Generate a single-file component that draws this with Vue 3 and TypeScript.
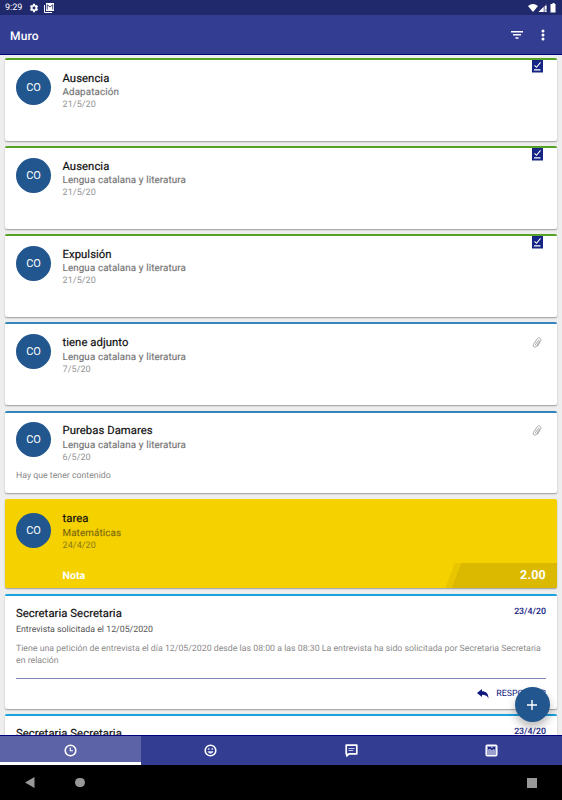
<script setup lang="ts">
interface Entry {
  title: string
  subject: string
  date: string
  tone: 'green' | 'blue'
  badge?: 'check' | 'clip'
  note?: string
}

const entries: Entry[] = [
  { title: 'Ausencia', subject: 'Adapatación', date: '21/5/20', tone: 'green', badge: 'check' },
  { title: 'Ausencia', subject: 'Lengua catalana y literatura', date: '21/5/20', tone: 'green', badge: 'check' },
  { title: 'Expulsión', subject: 'Lengua catalana y literatura', date: '21/5/20', tone: 'green', badge: 'check' },
  { title: 'tiene adjunto', subject: 'Lengua catalana y literatura', date: '7/5/20', tone: 'blue', badge: 'clip' },
  { title: 'Purebas Damares', subject: 'Lengua catalana y literatura', date: '6/5/20', tone: 'blue', badge: 'clip', note: 'Hay que tener contenido' },
]
</script>

<template>
  <div class="screen">
    <div class="status">
      <span class="clock">9:29</span>
      <svg class="gear" viewBox="0 0 24 24" width="10" height="10"><path fill="#fff" fill-rule="evenodd" d="M19.4 13a7.500 7.500 0 0 0 0-2l2.100-1.650a.5.5 0 0 0 .12-.64l-2-3.460a.5.5 0 0 0-.61-.22l-2.490 1a7.300 7.300 0 0 0-1.690-.98l-.38-2.650A.49.49 0 0 0 14 2h-4a.49.49 0 0 0-.49.42l-.38 2.650c-.61.25-1.170.59-1.690.98l-2.490-1a.5.5 0 0 0-.61.22l-2 3.460a.49.49 0 0 0 .12.640L4.600 11a7.900 7.900 0 0 0 0 2l-2.110 1.650a.5.5 0 0 0-.12.640l2 3.460c.12.22.39.3.61.22l2.490-1c.52.4 1.080.73 1.690.98l.38 2.650c.03.24.24.42.49.42h4c.25 0 .46-.18.49-.42l.38-2.650c.61-.25 1.170-.59 1.690-.98l2.490 1c.23.09.49 0 .61-.22l2-3.460a.5.5 0 0 0-.12-.64zM12 15.500a3.500 3.500 0 1 1 0-7 3.500 3.500 0 0 1 0 7z"/></svg>
      <svg class="mail" viewBox="0 0 20 20" width="10" height="10"><path fill="none" stroke="#fff" stroke-width="2" d="M1 4v15h15"/><path fill="#fff" d="M4 0h16v16H4z"/><path fill="none" stroke="#20296b" stroke-width="1.700" d="M6.500 13V3.500L12 8l5.500-4.500V13"/></svg>
      <svg class="signals" viewBox="0 0 29 10" width="29" height="10"><path fill="#fff" d="M0 3Q5-1 10 3L5 9z"/><path fill="#8e91b5" d="M10.500 9L18.500 1v8z"/><path fill="#fff" d="M10.500 9L15.500 4v5zM17 7.500h1.500V9H17zM17 3h1.500v3.500H17z"/><path fill="#fff" d="M23.500 1h1V0h2v1h1v8.500h-5V1z"/></svg>
    </div>
    <header class="bar">
      <h1>Muro</h1>
      <svg class="filter" viewBox="0 0 12 8" width="12" height="8"><path fill="#fff" d="M0 0h12v1.500H0zM2 3.100h8v1.500H2zM4.500 6.200h3v1.500h-3z"/></svg>
      <svg class="more" viewBox="0 0 4 12" width="4" height="12"><g fill="#fff"><circle cx="2" cy="2" r="1.500"/><circle cx="2" cy="6" r="1.500"/><circle cx="2" cy="10" r="1.500"/></g></svg>
    </header>

    <main class="feed">
      <article v-for="(e, i) in entries" :key="i" class="card entry" :class="e.tone">
        <div class="head">
          <span class="avatar">CO</span>
          <div class="info">
            <h2>{{ e.title }}</h2>
            <p class="subject">{{ e.subject }}</p>
            <p class="date">{{ e.date }}</p>
          </div>
        </div>
        <p v-if="e.note" class="note">{{ e.note }}</p>
        <svg v-if="e.badge === 'check'" class="check" viewBox="0 0 11 13" width="11" height="13"><path fill="#142585" d="M0 0h11v12.500H0z"/><path fill="none" stroke="#fff" stroke-width="1.100" d="M2.500 5.300l2 2L8.500 2.300M2 9.900h6.500"/></svg>
        <svg v-if="e.badge === 'clip'" class="clip" viewBox="0 0 10 12" width="10" height="12"><path fill="none" stroke="#a8a8a8" stroke-width="1" stroke-linecap="round" d="M3.200 8L6 4C6.700 3 8 3.800 7.300 4.900L4.400 9.300C3.100 11.200.2 9.600 1.500 7.400L5.100 2C6.700-.2 10 1.800 8.500 4.400L5.300 9.400"/></svg>
      </article>

      <article class="card task">
        <div class="head">
          <span class="avatar">CO</span>
          <div class="info">
            <h2>tarea</h2>
            <p class="subject">Matemáticas</p>
            <p class="date">24/4/20</p>
          </div>
        </div>
        <div class="grade">
          <span class="label">Nota</span>
          <span class="score">2.00</span>
        </div>
      </article>

      <article class="card message">
        <div class="top"><h2>Secretaria Secretaria</h2><span class="day">23/4/20</span></div>
        <p class="summary">Entrevista solicitada el 12/05/2020</p>
        <p class="body">Tiene una petición de entrevista el día 12/05/2020 desde las 08:00 a las 08:30 La entrevista ha sido solicitada por Secretaria Secretaria<br>en relación</p>
        <div class="actions">
          <svg viewBox="0 0 12 10" width="12" height="10"><path fill="#10187f" d="M0 4L5 0v2.300C9 2.300 11.500 4.600 11.500 9.500 10 6.500 8 5.800 5 5.800V8z"/></svg>
          <span>RESPONDER</span>
        </div>
      </article>

      <article class="card message">
        <div class="top"><h2>Secretaria Secretaria</h2><span class="day">23/4/20</span></div>
      </article>
    </main>

    <button class="fab" aria-label="+"><svg viewBox="0 0 10 10" width="10" height="10"><path stroke="#fff" stroke-width="1.400" d="M5 0v10M0 5h10"/></svg></button>

    <nav class="tabs">
      <div class="tab active"><svg viewBox="0 0 13 13" width="13" height="13"><g fill="none" stroke="#fff"><circle cx="6.500" cy="6.500" r="5.300" stroke-width="1.600"/><path stroke-width="1.100" d="M6.300 3.500v3.300H9"/></g></svg></div>
      <div class="tab"><svg viewBox="0 0 13 13" width="13" height="13"><circle cx="6.500" cy="6.500" r="5.300" fill="none" stroke="#fff" stroke-width="1.600"/><path fill="#e4e6f4" d="M3.900 4.200h1.600v1.500H3.900zM7.500 4.200h1.600v1.500H7.500zM3.500 7.300h6Q8.700 9.700 6.500 9.700T3.500 7.300z"/></svg></div>
      <div class="tab"><svg viewBox="0 0 13 13" width="13" height="13"><path fill="none" stroke="#fff" stroke-width="1.700" stroke-linejoin="round" d="M1.200 1.200h10.600v8.600H4L1.800 12V9.800h-.6z"/><path stroke="#c9cce6" stroke-width="1" d="M3.500 4.500h6M3.500 6.500h4.700"/></svg></div>
      <div class="tab"><svg viewBox="0 0 13 13" width="13" height="13"><path fill="#9ba0cf" d="M2 2h9v9H2z"/><path fill="#171f80" d="M3 3h2.500L7 4.500 8.200 3H10v2.800L8.500 4.800 7 6.200 5 4.500 3 5.500z"/><rect x="1.200" y="1.200" width="10.600" height="10.600" rx="1" fill="none" stroke="#fff" stroke-width="1.500"/></svg></div>
    </nav>
    <div class="system">
      <svg viewBox="0 0 10 11" width="10" height="11"><path fill="#999" d="M9.500 0v11L0 5.500z"/></svg>
      <span class="home"></span>
      <span class="recent"></span>
    </div>
  </div>
</template>

<style>
body { margin: 0; overflow: hidden; }
</style>

<style scoped>
* { box-sizing: border-box; }
h1, h2, p { margin: 0; }
.screen { position: relative; display: flex; flex-direction: column; width: 562px; height: 800px; overflow: hidden; background: #eee; font-family: Roboto, sans-serif; text-rendering: geometricPrecision; }
.status { display: flex; align-items: center; flex: none; height: 15px; padding: 0 5px; background: #20296b; color: #fff; }
.clock { width: 24px; padding-top: 1px; font-size: 9px; }
.mail { margin-left: 5px; }
.signals { margin-left: auto; }
.bar { display: flex; align-items: center; flex: none; height: 40px; padding: 0 17px 0 10px; background: #333d92; border-bottom: 1px solid #00007d; color: #fff; }
h1 { flex: 1; padding-top: 2px; font-size: 12px; font-weight: 500; letter-spacing: .2px; }
.more { margin-left: 18.500px; }
.feed { display: flex; flex: 1; flex-direction: column; gap: 5.400px; min-height: 0; padding: 3px 5px 0; overflow: hidden; }
.card { position: relative; flex: none; background: #fff; border-radius: 2px; box-shadow: 0 1px 1.500px rgba(0,0,0,.35); }
.entry { height: 82.780px; padding: 11.600px 11px 0; border-top: 2px solid; }
.green { border-color: #56a226; }
.blue { border-color: #3585bd; }
.head { display: flex; gap: 11.500px; }
.avatar { display: flex; align-items: center; justify-content: center; flex: none; width: 35px; height: 35px; margin-top: -2px; border-radius: 50%; background: #21568e; color: #fff; font-size: 11px; }
h2 { color: #111; font-size: 11.300px; line-height: 14px; font-weight: 400; letter-spacing: .06px; -webkit-text-stroke: .2px; }
.subject { padding-top: .5px; color: #757575; font-size: 9.800px; line-height: 14px; font-weight: 400; letter-spacing: .12px; -webkit-text-stroke: .15px; }
.date { color: #949494; font-size: 9px; line-height: 11px; letter-spacing: .1px; }
.note { padding-top: 7.300px; color: #888; font-size: 8.750px; line-height: 11px; }
.check { position: absolute; top: 0; right: 14px; }
.clip { position: absolute; top: 12.500px; right: 15px; }
.task { height: 89.600px; padding: 15.800px 0 0 11px; background: #f6d100; overflow: hidden; }
.task .info { margin-top: -2.200px; }
.task .subject { color: #7b6b0b; }
.task .date { color: #8c7b18; }
.grade { position: absolute; right: 0; bottom: 0; left: 0; display: flex; justify-content: space-between; height: 25px; padding-left: 57.500px; color: #fff; line-height: 26px; }
.label { font-size: 10.600px; font-weight: 700; }
.score { width: 111px; padding-right: 11px; background: linear-gradient(111deg, transparent 8px, #e9c500 8.500px 14px, #dab900 14.500px); text-align: right; font-size: 12.500px; font-weight: 700; letter-spacing: .2px; }
.message { height: 115px; padding: 9.300px 11px 0; border-top: 2px solid #1aa0dc; }
.top { display: flex; justify-content: space-between; height: 18px; }
.top h2 { line-height: 17px; }
.day { padding-top: 1px; color: #10187f; font-size: 8.800px; line-height: 12px; font-weight: 500; }
.summary { color: #555; font-size: 8.800px; line-height: 15px; }
.body { padding-top: 4.500px; color: #8b8b8b; font-size: 8.770px; line-height: 12.300px; white-space: nowrap; }
.actions { display: flex; align-items: center; justify-content: flex-end; gap: 7.500px; height: 31px; margin-top: 11px; border-top: 1px solid #8185b5; color: #10187f; font-size: 8.800px; }
.fab { position: absolute; top: 687px; left: 514.500px; display: flex; align-items: center; justify-content: center; width: 35px; height: 35px; padding: 0; border: 0; border-radius: 50%; background: #21568e; box-shadow: 0 5px 8px rgba(0,0,0,.28); }
.tabs { position: relative; display: flex; flex: none; height: 30px; background: #333d92; border-top: 1px solid #00007d; }
.tab { display: flex; flex: 1; align-items: center; justify-content: center; }
.active { background: #5c63a7; border-bottom: 3px solid #fff; padding-top: 3px; }
.system { display: flex; align-items: center; flex: none; height: 35px; padding: 0 25px 0 24.500px; background: #000; }
.home { width: 9.500px; height: 9.500px; margin-left: 40.500px; border-radius: 50%; background: #999; }
.recent { width: 10px; height: 10px; margin-left: auto; background: #999; }
</style>
